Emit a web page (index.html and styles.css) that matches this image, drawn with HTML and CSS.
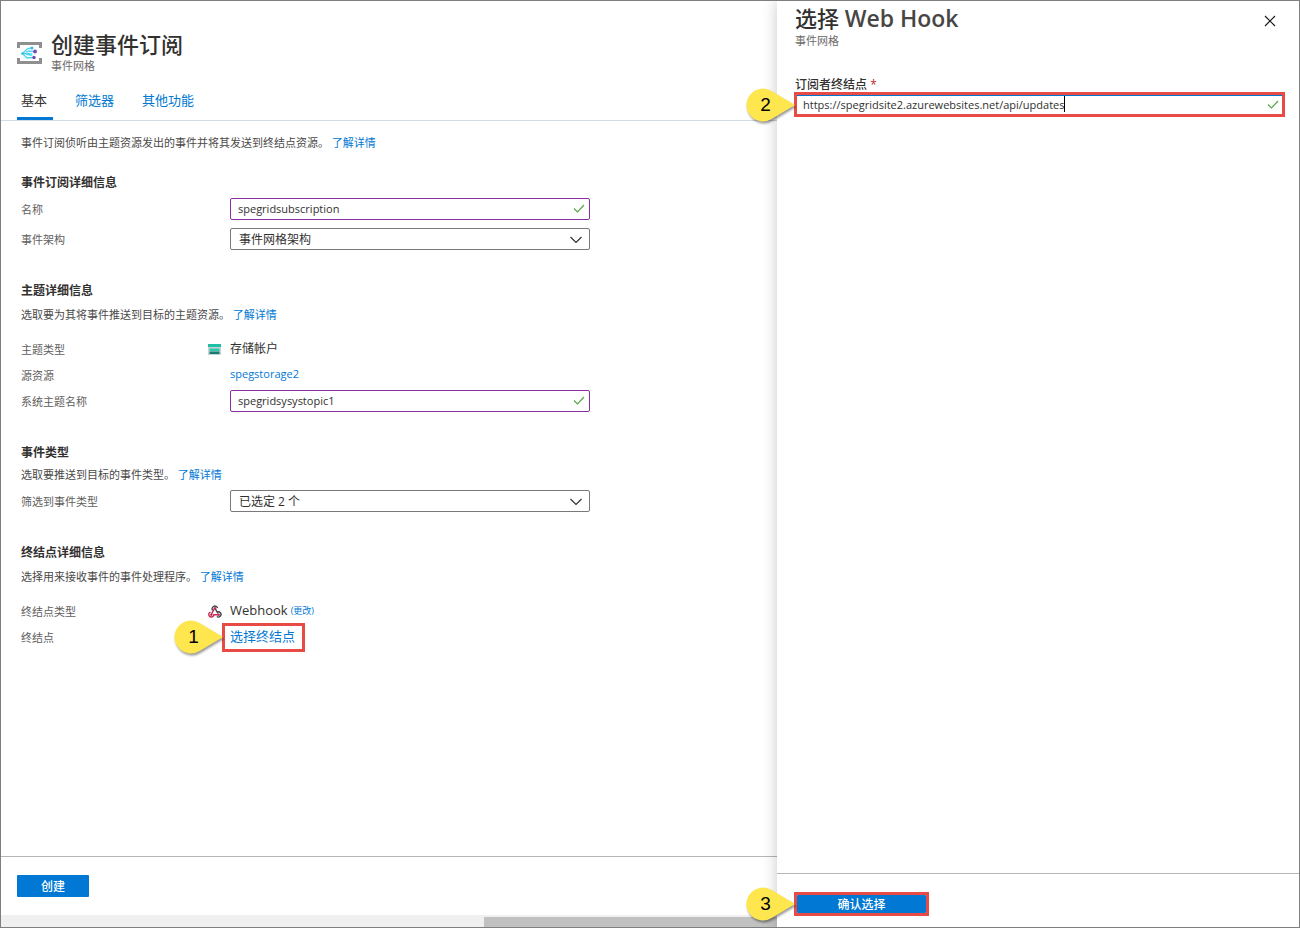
FILE: index.html
```html
<!DOCTYPE html>
<html lang="zh-CN">
<head>
<meta charset="utf-8">
<title>创建事件订阅</title>
<link rel="stylesheet" href="styles.css">
</head>
<body>
<div class="app">
  <main class="blade">
    <header class="blade-header">
      <svg class="blade-icon" width="25" height="22" viewBox="0 0 25 22" aria-hidden="true">
        <path d="M0 0h25v6h-3V3H3v3H0zM0 22h25v-6h-3v3H3v-3H0z" fill="#8f8f8f"/>
        <path d="M4.500 11.500h9M6 11l4-4 4-1M6 12l4 4 6-.5M9 10l3-1 4 .5M9 12l4 1" fill="none" stroke="#50d2ee" stroke-width="1.300"/>
        <circle cx="15" cy="6" r="1.500" fill="#32bedd"/>
        <circle cx="14" cy="12.500" r="1.500" fill="#50e6ff"/>
        <circle cx="5.500" cy="11.500" r="1.200" fill="#32bedd"/>
        <circle cx="18" cy="9.500" r="1.900" fill="#7148b8"/>
        <circle cx="17" cy="15.500" r="1.700" fill="#7148b8"/>
      </svg>
      <div>
        <h1 class="title">创建事件订阅</h1>
        <div class="subtitle">事件网格</div>
      </div>
    </header>
    <nav class="tabs">
      <a class="tab tab-active" href="#basic">基本</a>
      <a class="tab" href="#filters">筛选器</a>
      <a class="tab" href="#more">其他功能</a>
    </nav>
    <div class="blade-body">
      <p class="text">事件订阅侦听由主题资源发出的事件并将其发送到终结点资源。 <a href="#learn">了解详情</a></p>

      <section class="section section-first">
        <h2>事件订阅详细信息</h2>
        <div class="row">
          <label for="name">名称</label>
          <div class="field">
            <input id="name" class="control control-valid" type="text" value="spegridsubscription">
            <svg class="mark check" width="12" height="9" viewBox="0 0 12 9" aria-hidden="true"><path d="M1 4.500 4.500 8 11 1"/></svg>
          </div>
        </div>
        <div class="row row-spaced">
          <label for="schema">事件架构</label>
          <div class="field">
            <select id="schema" class="control"><option>事件网格架构</option></select>
            <svg class="mark chevron" width="12" height="8" viewBox="0 0 12 8" aria-hidden="true"><path d="M.5 1 6 6.500 11.500 1"/></svg>
          </div>
        </div>
      </section>

      <section class="section">
        <h2>主题详细信息</h2>
        <p class="text">选取要为其将事件推送到目标的主题资源。 <a href="#learn">了解详情</a></p>
        <div class="row row-lead">
          <span class="label">主题类型</span>
          <svg class="row-icon" width="13" height="11" viewBox="0 0 13 11" aria-hidden="true">
            <path d="M0 0h13v3H0z" fill="#1fbfa5"/><path d="M0 3h13v8H0z" fill="#c9d3d2"/>
            <path d="M1.500 4.500h10V7h-10z" fill="#2cc7ad"/><path d="M1.500 7.500h10V10h-10z" fill="#147d72"/>
          </svg>
          <span class="value">存储帐户</span>
        </div>
        <div class="row">
          <span class="label">源资源</span>
          <a class="value-link" href="#storage">spegstorage2</a>
        </div>
        <div class="row">
          <label for="topic">系统主题名称</label>
          <div class="field">
            <input id="topic" class="control control-valid" type="text" value="spegridsysystopic1">
            <svg class="mark check" width="12" height="9" viewBox="0 0 12 9" aria-hidden="true"><path d="M1 4.500 4.500 8 11 1"/></svg>
          </div>
        </div>
      </section>

      <section class="section section-tight">
        <h2>事件类型</h2>
        <p class="text">选取要推送到目标的事件类型。 <a href="#learn">了解详情</a></p>
        <div class="row">
          <label for="types">筛选到事件类型</label>
          <div class="field">
            <select id="types" class="control"><option>已选定 2 个</option></select>
            <svg class="mark chevron" width="12" height="8" viewBox="0 0 12 8" aria-hidden="true"><path d="M.5 1 6 6.500 11.500 1"/></svg>
          </div>
        </div>
      </section>

      <section class="section">
        <h2>终结点详细信息</h2>
        <p class="text">选择用来接收事件的事件处理程序。 <a href="#learn">了解详情</a></p>
        <div class="row row-lead">
          <span class="label">终结点类型</span>
          <svg class="row-icon" width="14" height="13" viewBox="0 0 14 13" aria-hidden="true">
            <g fill="none" stroke-width="1.400">
              <path d="M4.600 5.500A2.800 2.800 0 1 1 9.600 3.200M7 3.300l3 5" stroke="#45454d"/>
              <path d="M6.500 3.500 3.500 9.200M2.500 7.200A2.500 2.500 0 1 0 5.800 9.800H10" stroke="#c52b55"/>
              <path d="M9 7.200a2.600 2.600 0 1 1-.2 4.300" stroke="#45454d"/>
            </g>
            <circle cx="7" cy="3.300" r="1.200" fill="#c52b55"/>
            <circle cx="3.300" cy="9.700" r="1.200" fill="#c52b55"/>
            <circle cx="10.700" cy="9.700" r="1.200" fill="#c52b55"/>
          </svg>
          <span class="value value-large">Webhook</span>
          <a class="change" href="#change">(更改)</a>
        </div>
        <div class="row">
          <span class="label">终结点</span>
          <div class="highlight highlight-link">
            <a class="endpoint-link" href="#endpoint">选择终结点</a>
            <div class="callout">
              <svg width="56" height="40" viewBox="0 0 56 40" aria-hidden="true"><path d="M56 20 33 6.200A16.500 16.500 0 1 0 33 33.800Z"/></svg>
              <span>1</span>
            </div>
          </div>
        </div>
      </section>
    </div>
    <footer class="blade-footer">
      <button class="button" type="button">创建</button>
    </footer>
    <div class="scrollbar"><div class="scroll-thumb"></div></div>
  </main>

  <aside class="panel">
    <header class="panel-header">
      <div>
        <h1 class="title">选择 <span class="latin">Web Hook</span></h1>
        <div class="subtitle">事件网格</div>
      </div>
      <button class="close" type="button" aria-label="关闭">
        <svg width="12" height="12" viewBox="0 0 12 12" aria-hidden="true"><path d="M1 1l10 10M11 1 1 11"/></svg>
      </button>
    </header>
    <div class="panel-body">
      <label class="panel-label" for="url">订阅者终结点 <span class="required">*</span></label>
      <div class="highlight highlight-field">
        <input id="url" class="url" type="text" value="https://spegridsite2.azurewebsites.net/api/updates">
        <span class="caret"></span>
        <svg class="mark check" width="12" height="9" viewBox="0 0 12 9" aria-hidden="true"><path d="M1 4.500 4.500 8 11 1"/></svg>
        <div class="callout">
          <svg width="56" height="40" viewBox="0 0 56 40" aria-hidden="true"><path d="M56 20 33 6.200A16.500 16.500 0 1 0 33 33.800Z"/></svg>
          <span>2</span>
        </div>
      </div>
    </div>
    <footer class="panel-footer">
      <div class="highlight highlight-button">
        <button class="button button-confirm" type="button">确认选择</button>
        <div class="callout">
          <svg width="56" height="40" viewBox="0 0 56 40" aria-hidden="true"><path d="M56 20 33 6.200A16.500 16.500 0 1 0 33 33.800Z"/></svg>
          <span>3</span>
        </div>
      </div>
    </footer>
  </aside>
</div>
</body>
</html>
```
FILE: styles.css
```css
* { box-sizing: border-box; }

body {
  margin: 0;
  color: #323130;
  background: #fff;
  font-family: "Open Sans", "Noto Sans CJK SC", sans-serif;
  font-size: 11px;
  line-height: 20px;
}

a { color: #0078d4; text-decoration: none; }
h1, h2, p { margin: 0; }
input, select, button { font-family: inherit; margin: 0; }
svg { display: block; flex: none; }

.app {
  display: flex;
  min-height: 100vh;
  border: 1px solid #7f7f7f;
}

.blade { flex: 1; min-width: 0; display: flex; flex-direction: column; }

.blade-header {
  display: flex;
  align-items: center;
  gap: 9px;
  padding: 28px 16px 0;
}

.title { font-size: 22px; line-height: 30px; font-weight: 500; }
.subtitle { line-height: 14px; color: #6b6a68; }
.blade-icon { margin-top: 4px; }

.tabs {
  display: flex;
  gap: 18px;
  margin-top: 13px;
  padding: 0 16px;
  border-bottom: 1px solid #d3dbe3;
}
.tab {
  padding: 0 6px 2px 4px;
  font-size: 13px;
  line-height: 29px;
  border-bottom: 3px solid transparent;
}
.tab { padding-bottom: 2px; }
.tab-active { color: #323130; border-bottom-color: #0078d4; }

.blade-body { flex: 1; padding: 11px 20px; }
.text { color: #4a4948; }

.section { display: flex; flex-direction: column; gap: 4px; margin-top: 30px; }
.section-first { margin-top: 20px; gap: 6px; }
.section-tight { gap: 2px; }
.section-tight .row { margin-top: 4px; }
.section h2 { font-size: 12px; font-weight: 700; }
.section h2, .text, .row label, .label { padding-top: 2px; line-height: 18px; }

.row {
  display: grid;
  grid-template-columns: 187px 22px auto auto 1fr;
  grid-template-rows: 22px;
  align-items: center;
  height: 22px;
}
.row-spaced { margin-top: 2px; }
.row-lead { margin-top: 10px; }
.row label, .label { color: #605e5c; grid-column: 1; }
.row-icon { grid-column: 2; }
.value, .value-link, .field, .highlight-link { grid-column: 3; }
.value { font-size: 12px; }
.value-large { font-size: 13px; line-height: 18px; padding-bottom: 2px; }
.value-link { line-height: 18px; padding-bottom: 2px; }
.change { margin-left: 3px; font-size: 9px; }

.field { position: relative; width: 360px; }
.control {
  display: block;
  width: 100%;
  height: 22px;
  padding: 2px 24px 0 8px;
  border: 1px solid #7a7978;
  border-radius: 2px;
  background: #fff;
  color: #323130;
  font-size: 12px;
  line-height: 18px;
  appearance: none;
  outline: 0;
}
.control-valid { border-color: #8a2da5; font-size: 11px; padding: 0 24px 2px 7px; }

.mark { position: absolute; fill: none; }
.check { right: 5px; top: 6px; stroke: #57a64a; stroke-width: 1.2; }
.chevron { right: 8px; top: 8px; stroke: #323130; stroke-width: 1.2; }

.highlight { position: relative; border: 3px solid #e84a45; }
.highlight-link { margin: -5px -8px; padding: 0 7px 3px 5px; }
.endpoint-link { display: block; font-size: 13px; }

.callout {
  position: absolute;
  right: 100%;
  top: 50%;
  display: grid;
  margin: -20px 2px 0 0;
}
.callout svg {
  fill: #fee64f;
  overflow: visible;
  filter: drop-shadow(1px 2px 1px rgba(0, 0, 0, 0.4));
}
.callout svg, .callout span { grid-area: 1 / 1; }
.callout span {
  position: relative;
  width: 53px;
  color: #000;
  font: 19px/40px "Liberation Sans", sans-serif;
  text-align: center;
}

.blade-footer { padding: 18px 16px; border-top: 1px solid #b5b5b5; }
.button {
  display: block;
  width: 72px;
  height: 22px;
  padding: 1px 0 0;
  border: 0;
  border-radius: 1px;
  background: #0078d4;
  color: #fff;
  font-size: 12px;
  font-weight: 500;
  line-height: 20px;
}

.scrollbar { height: 12px; padding-top: 2px; background: #f0f0f0; }
.scroll-thumb { height: 10px; margin-left: auto; width: 293px; background: #c1c1c1; }

.panel {
  position: relative;
  display: flex;
  flex-direction: column;
  width: 522px;
  flex: none;
  background: #fff;
  box-shadow: 0 0 14px rgba(0, 0, 0, 0.22);
  clip-path: inset(0 0 0 -60px);
}
.panel-header {
  display: flex;
  justify-content: space-between;
  align-items: flex-start;
  padding: 3px 22px 0 18px;
}
.panel .title { line-height: 28px; padding-bottom: 2px; }
.latin { font-weight: 600; font-size: 23px; color: #484644; }
.close {
  display: grid;
  place-items: center;
  width: 14px;
  height: 33px;
  padding: 0;
  border: 0;
  background: none;
}
.close svg { fill: none; stroke: #1b1a19; stroke-width: 1.2; }

.panel-body { flex: 1; padding: 30px 14px 0 17px; }
.panel-label { display: block; padding-left: 1px; font-size: 12px; font-weight: 500; line-height: 14px; }
.required { color: #c4262e; }
.highlight-field .check { right: 3px; top: 5px; }
.url {
  display: block;
  width: 100%;
  height: 19px;
  padding: 0 20px 2px 6px;
  border: 0;
  border-top: 1px solid #0078d4;
  color: #323130;
  font-size: 11px;
  outline: 0;
}
.caret { position: absolute; left: 267px; top: 1px; width: 1px; height: 16px; background: #000; }

.panel-footer { display: flex; padding: 18px 17px 11px; border-top: 1px solid #b5b5b5; }
.button-confirm { width: 129px; height: 18px; line-height: 17px; }
```
